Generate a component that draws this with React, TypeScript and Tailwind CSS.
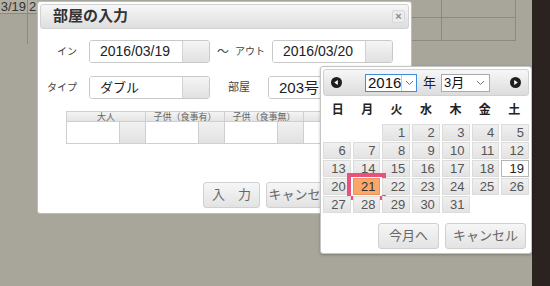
import React from "react";

const jp = "font-[family-name:'Liberation_Sans','Noto_Sans_CJK_JP',sans-serif]";

function SplitInput({ value, w = 121, size = 14 }: { value: string; w?: number; size?: number }) {
  return (
    <div
      className="flex h-[23px] overflow-hidden rounded-[3px] border border-[#c9c9c9]"
      style={{ width: w }}
    >
      <div
        className="min-w-0 flex-1 overflow-hidden whitespace-nowrap bg-white pl-[10px] leading-[21px] text-[#222]"
        style={{ fontSize: size }}
      >
        {value}
      </div>
      <div className="w-[27px] shrink-0 border-l border-[#d2d2d2] bg-gradient-to-b from-[#f5f5f5] to-[#e1e1e1]" />
    </div>
  );
}

function GrayButton({ label, w }: { label: string; w: number }) {
  return (
    <div
      className="flex h-[26px] items-center justify-center whitespace-nowrap rounded-[3px] border border-[#d0d0d0] bg-gradient-to-b from-[#f6f6f6] to-[#e3e3e3] text-[13px] text-[#666]"
      style={{ width: w }}
    >
      {label}
    </div>
  );
}

function CircleArrow({ dir }: { dir: "l" | "r" }) {
  return (
    <svg width="11" height="11" viewBox="0 0 11 11">
      <circle cx="5.5" cy="5.5" r="5.5" fill="#1e1e1e" />
      {dir === "l" ? (
        <polygon points="3.2,5.5 6.8,3 6.8,8" fill="#fff" />
      ) : (
        <polygon points="7.8,5.5 4.2,3 4.2,8" fill="#fff" />
      )}
    </svg>
  );
}

function Chevron() {
  return (
    <svg width="9" height="6" viewBox="0 0 9 6">
      <polyline points="1,1 4.5,4.5 8,1" fill="none" stroke="#777" strokeWidth="1" />
    </svg>
  );
}

const weekdays = ["日", "月", "火", "水", "木", "金", "土"];
const days: (number | null)[] = [null, null, ...Array.from({ length: 31 }, (_, i) => i + 1)];

function DayCell({ d }: { d: number | null }) {
  if (d === null) return <div className="h-[17px]" />;
  const today = d === 19;
  const picked = d === 21;
  return (
    <div
      className={
        "relative h-[17px] pr-[4px] text-right text-[13px] leading-[16px] " +
        (picked
          ? "border border-[#e9935a] bg-[#f9a76a] text-[#333]"
          : today
          ? "border border-[#b5b5b5] bg-white text-[#222]"
          : "border border-[#dcdcdc] bg-gradient-to-b from-[#f0f0f0] to-[#e3e3e3] text-[#555]")
      }
    >
      {d}
      {picked && (
        <div className="absolute -bottom-[6px] -left-[7px] -right-[7px] -top-[6px] border-[4px] border-[#e8517d]" />
      )}
    </div>
  );
}

export default function App() {
  return (
    <div className={`relative h-[286px] w-[550px] overflow-hidden bg-[#a8a69a] ${jp}`}>
      {/* page behind the modal */}
      <div className="absolute left-0 top-0 flex h-[14px] w-[37px] items-end overflow-hidden border-b border-[#8c8a80] bg-[#b3b1a6] text-[13px] leading-[12px] text-[#333]">
        <span className="w-[26px] whitespace-nowrap text-right">3/19</span>
        <span className="ml-[3px]">2</span>
      </div>
      <div className="absolute left-[27px] top-0 h-[44px] w-px bg-[#8c8a80]" />
      <div className="absolute left-[412px] top-[-2px] h-[43px] w-[104px] border-b border-r border-[#8c8a80]">
        <div className="h-[20px] border-b border-[#8c8a80]" />
      </div>
      <div className="absolute left-[441px] top-0 h-[40px] w-px bg-[#8c8a80]" />
      <div className="absolute right-0 top-0 h-[286px] w-[18px] bg-[#2a2320]" />

      {/* dialog */}
      <div className="absolute left-[37px] top-[1px] h-[213px] w-[375px] rounded-[3px] border border-[#bdbdbd] bg-white p-[2px]">
        <div className="flex h-[25px] items-center justify-between rounded-[3px] border border-[#d2d2d2] bg-gradient-to-b from-[#f7f7f7] to-[#dedede] pl-[12px] pr-[3px]">
          <span className="text-[15px] font-bold text-[#333]">部屋の入力</span>
          <span className="flex h-[13px] w-[13px] items-center justify-center rounded-[2px] border border-[#d8d8d8] bg-[#ececec] text-[11px] font-bold leading-none text-[#888]">
            ×
          </span>
        </div>

        <div className="mt-[11px] flex items-center">
          <span className="w-[37px] text-right text-[10px] text-[#444]">イン</span>
          <div className="ml-[12px]">
            <SplitInput value="2016/03/19" />
          </div>
          <span className="ml-[7px] w-[12px] text-[12px] text-[#444]">～</span>
          <span className="ml-[6px] w-[31px] text-[10px] text-[#444]">アウト</span>
          <div className="ml-[6px]">
            <SplitInput value="2016/03/20" />
          </div>
        </div>

        <div className="mt-[13px] flex items-center">
          <span className="w-[37px] text-right text-[10px] text-[#444]">タイプ</span>
          <div className="ml-[12px]">
            <SplitInput value="ダブル" size={13} />
          </div>
          <span className="ml-[18px] w-[22px] text-[11px] text-[#444]">部屋</span>
          <div className="ml-[18px]">
            <SplitInput value="203号室" size={15} />
          </div>
        </div>

        <div className="ml-[26px] mt-[12px] flex w-[320px] border-l border-t border-[#cfcfcf]">
          {["大人", "子供（食事有）", "子供（食事無）", ""].map((h, i) => (
            <div key={i} className="w-[79px] shrink-0 border-b border-r border-[#cfcfcf]">
              <div className="h-[10px] border-b border-[#cfcfcf] bg-gradient-to-b from-[#f4f4f4] to-[#e4e4e4] text-center text-[9px] leading-[10px] text-[#666]">
                {h}
              </div>
              <div className="flex h-[21px]">
                <div className="flex-1 bg-white" />
                <div className="w-[26px] border-l border-[#cfcfcf] bg-gradient-to-b from-[#f1f1f1] to-[#e2e2e2]" />
              </div>
            </div>
          ))}
        </div>

        <div className="ml-[163px] mt-[38px] flex gap-[6px]">
          <GrayButton label="入　力" w={57} />
          <GrayButton label="キャンセル" w={70} />
        </div>
      </div>

      {/* datepicker popup */}
      <div className="absolute left-[320px] top-[66px] h-[188px] w-[212px] rounded-[3px] border border-[#c4c4c4] bg-white p-[2px] shadow-[0_1px_3px_rgba(0,0,0,0.25)]">
        <div className="flex h-[27px] items-center rounded-[3px] border border-[#d0d0d0] bg-gradient-to-b from-[#f7f7f7] to-[#dcdcdc] px-[7px]">
          <CircleArrow dir="l" />
          <div className="ml-[23px] flex h-[18px] w-[52px] items-center border border-[#3c8ee0] bg-white">
            <span className="flex-1 pl-[2px] text-[15px] leading-[16px] text-[#111]">2016</span>
            <span className="flex h-full w-[15px] items-center justify-center border-l border-[#bfcbe0]">
              <Chevron />
            </span>
          </div>
          <span className="ml-[6px] text-[13px] text-[#222]">年</span>
          <div className="ml-[5px] flex h-[18px] w-[49px] items-center border border-[#aaa] bg-white">
            <span className="flex-1 pl-[2px] text-[13px] leading-[16px] text-[#111]">3月</span>
            <span className="pr-[4px]">
              <Chevron />
            </span>
          </div>
          <span className="ml-auto">
            <CircleArrow dir="r" />
          </span>
        </div>

        <div className="grid h-[28px] grid-cols-7 items-center">
          {weekdays.map((w) => (
            <span key={w} className="text-center text-[12px] font-bold text-[#222]">
              {w}
            </span>
          ))}
        </div>

        <div className="grid w-[206px] grid-cols-7 gap-x-[2px] gap-y-px">
          {days.map((d, i) => (
            <DayCell key={i} d={d} />
          ))}
        </div>

        <div className="mt-[10px] flex justify-end gap-[6px] pr-[3px]">
          <GrayButton label="今月へ" w={61} />
          <GrayButton label="キャンセル" w={81} />
        </div>
      </div>
    </div>
  );
}
